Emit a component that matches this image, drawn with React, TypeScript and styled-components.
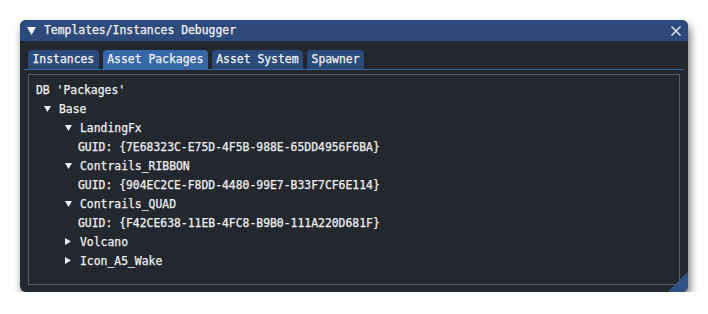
import React from "react";
import styled, { createGlobalStyle } from "styled-components";

const Global = createGlobalStyle`
  html, body { margin: 0; padding: 0; background: #ffffff; }
  body { font-family: "DejaVu Sans Mono", "Liberation Mono", monospace; }
`;

const Page = styled.div`
  padding: 20px 0 0 20px;
`;

const Window = styled.div`
  position: relative;
  width: 668px;
  height: 272px;
  background: #23272e;
  border-radius: 6px;
  box-shadow: 2px 5px 9px rgba(0, 0, 0, 0.55);
  overflow: hidden;
  display: flex;
  flex-direction: column;
  font-family: "DejaVu Sans Mono", "Liberation Mono", monospace;
  font-size: 11.4px;
  color: #f0f0f0;
  -webkit-text-stroke: 0.25px currentColor;
`;

const TitleBar = styled.div`
  height: 21px;
  flex: none;
  background: #2c4b7a;
  display: flex;
  align-items: center;
  padding: 0 7px;
  gap: 8px;
`;

const TitleText = styled.span`
  flex: 1;
  color: #f4f4f4;
  line-height: 21px;
`;

const Body = styled.div`
  flex: 1;
  display: flex;
  flex-direction: column;
  padding: 9px 8px 7px 8px;
`;

const TabBar = styled.div`
  display: flex;
  gap: 4px;
  height: 19px;
  flex: none;
`;

const Tab = styled.div<{ $active?: boolean }>`
  height: 19px;
  padding: 0 4.5px;
  border-radius: 4px 4px 0 0;
  background: ${(p) => (p.$active ? "#3667a6" : "#2a4a7a")};
  color: #f2f2f2;
  line-height: 19px;
  white-space: nowrap;
`;

const TabLine = styled.div`
  height: 1px;
  flex: none;
  background: #3667a6;
  margin: 0 -4px;
`;

const Content = styled.div`
  margin-top: 4px;
  flex: 1;
  border: 1px solid #5a5e67;
  padding: 5px 7px;
  display: flex;
  flex-direction: column;
`;

const Row = styled.div<{ $indent: number }>`
  height: 19px;
  display: flex;
  align-items: center;
  padding-left: ${(p) => p.$indent}px;
  white-space: nowrap;
`;

const Arrow = styled.span`
  width: 15px;
  flex: none;
  display: flex;
  align-items: center;
`;

const Grip = styled.div`
  position: absolute;
  right: 0;
  bottom: 0;
  width: 20px;
  height: 20px;
  background: linear-gradient(135deg, transparent 50%, #2f5183 50%);
`;

const Down = () => (
  <svg width={7} height={6} viewBox="0 0 7 6">
    <polygon points="0,0 7,0 3.5,6" fill="#eeeeee" />
  </svg>
);

const Right = () => (
  <svg width={6} height={7} viewBox="0 0 6 7">
    <polygon points="0,0 6,3.5 0,7" fill="#eeeeee" />
  </svg>
);

type Item = { text: string; indent: number; arrow?: "down" | "right" };

const items: Item[] = [
  { text: "DB 'Packages'", indent: 0 },
  { text: "Base", indent: 8, arrow: "down" },
  { text: "LandingFx", indent: 29, arrow: "down" },
  { text: "GUID: {7E68323C-E75D-4F5B-988E-65DD4956F6BA}", indent: 42 },
  { text: "Contrails_RIBBON", indent: 29, arrow: "down" },
  { text: "GUID: {904EC2CE-F8DD-4480-99E7-B33F7CF6E114}", indent: 42 },
  { text: "Contrails_QUAD", indent: 29, arrow: "down" },
  { text: "GUID: {F42CE638-11EB-4FC8-B9B0-111A220D681F}", indent: 42 },
  { text: "Volcano", indent: 29, arrow: "right" },
  { text: "Icon_A5_Wake", indent: 29, arrow: "right" },
];

const tabs = ["Instances", "Asset Packages", "Asset System", "Spawner"];

export default function App() {
  return (
    <>
      <Global />
      <Page>
        <Window>
          <TitleBar>
            <svg width={9} height={8} viewBox="0 0 9 8">
              <polygon points="0,0 9,0 4.5,8" fill="#f4f4f4" />
            </svg>
            <TitleText>Templates/Instances Debugger</TitleText>
            <svg width={10} height={10} viewBox="0 0 10 10">
              <path d="M0.5 0.5 L9.5 9.5 M9.5 0.5 L0.5 9.5" stroke="#f2f2f2" strokeWidth={1.3} />
            </svg>
          </TitleBar>
          <Body>
            <TabBar>
              {tabs.map((t) => (
                <Tab key={t} $active={t === "Asset Packages"}>
                  {t}
                </Tab>
              ))}
            </TabBar>
            <TabLine />
            <Content>
              {items.map((it, i) => (
                <Row key={i} $indent={it.indent}>
                  {it.arrow && <Arrow>{it.arrow === "down" ? <Down /> : <Right />}</Arrow>}
                  <span>{it.text}</span>
                </Row>
              ))}
            </Content>
          </Body>
          <Grip />
        </Window>
      </Page>
    </>
  );
}
